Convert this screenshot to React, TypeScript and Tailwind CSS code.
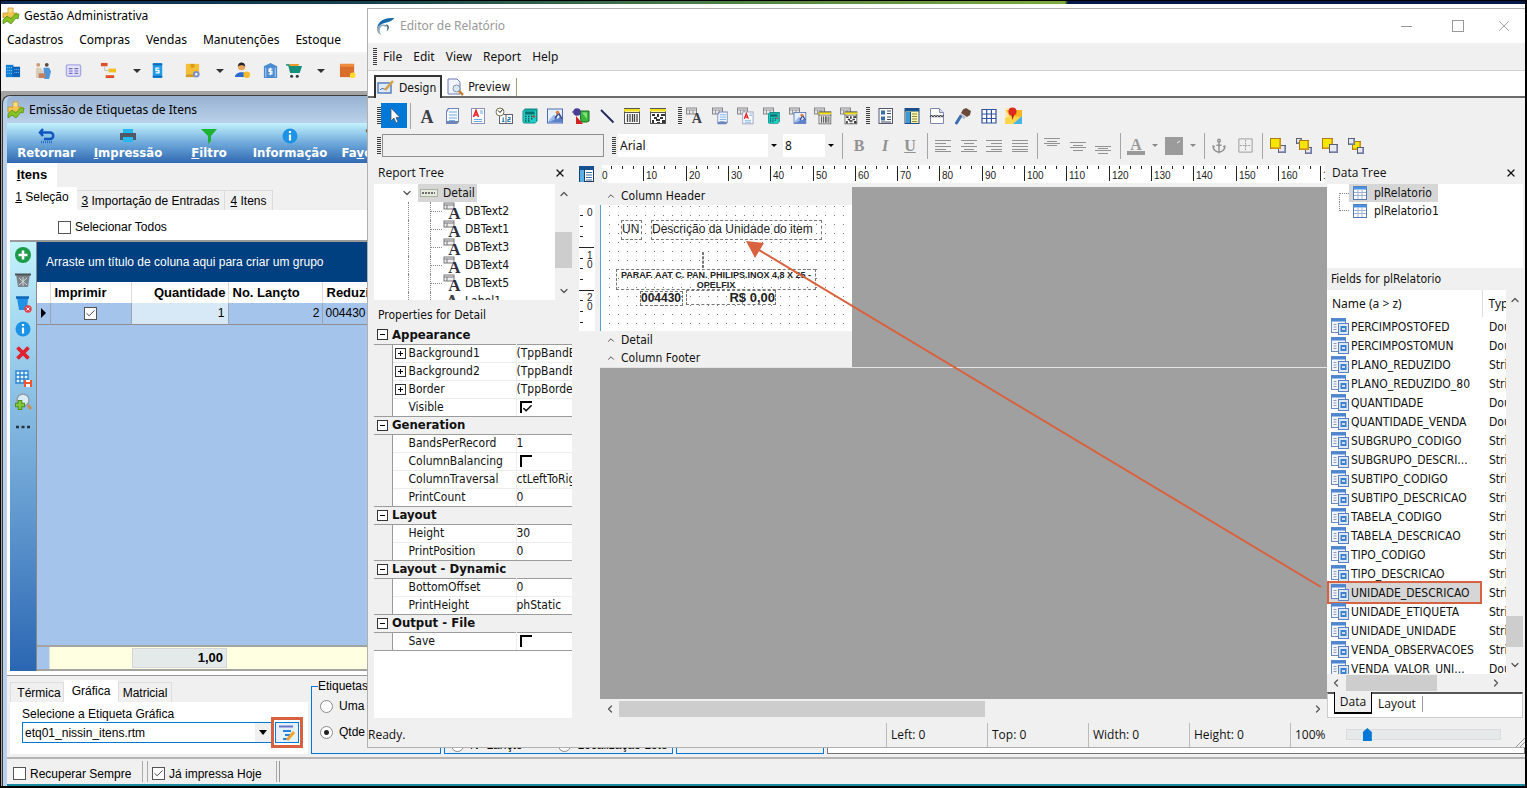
import React, { type ReactNode } from "react";
import { Anchor, Check, ChevronDown, ChevronUp, ChevronLeft, ChevronRight, X } from "lucide-react";

const title = "font-['Noto_Sans','Open_Sans',sans-serif]";
const segoe = "font-['Open_Sans','Noto_Sans',sans-serif]";
const tahoma = "font-['DejaVu_Sans_Condensed','DejaVu_Sans',sans-serif]";
const sans = "font-['Liberation_Sans',sans-serif]";

function Icon({ children, size = 18 }: { children: ReactNode; size?: number }) {
  return (
    <svg width={size} height={size} viewBox="0 0 18 18" className="block shrink-0" aria-hidden="true">
      {children}
    </svg>
  );
}

/* ---------- toolbar drawings, 18 x 18 ---------- */

const letterA = (
  <text x="9" y="15.500" textAnchor="middle" fontFamily="Liberation Serif" fontWeight="bold" fontSize="18" fill="#3d4048">
    A
  </text>
);

const memo = (
  <>
    <path d="M4 1h11v14l-2 2H2V4z" fill="#6f84b8" />
    <path d="M5 2h9v12H3V5z" fill="#f4f8ff" />
    <path d="M5 5h8M5 8h8M5 11h8M5 13.500h6" stroke="#79aee6" strokeWidth="1.200" />
  </>
);

const richText = (
  <>
    <rect x="2.500" y="1.500" width="13" height="15" fill="#fff" stroke="#8a93b5" />
    <path d="M5 12.500h8M5 14.500h8M11 4h3M11 6h3" stroke="#6aa7e6" />
    <path d="M4.500 10 7 3.500l2.500 6.500M5.500 8h3" fill="none" stroke="#e8202a" strokeWidth="1.600" />
  </>
);

const dateTime = (
  <>
    <rect x="4.500" y="7.500" width="13" height="9" fill="#fff" stroke="#5c6070" />
    <path d="M11 8v8" stroke="#5c6070" />
    <path d="M7 14.500h2.500M8.200 10.500v4M13 10.500h2v2h-2v2h2.500" stroke="#2c7cb8" fill="none" strokeWidth="1.200" />
    <circle cx="5" cy="5" r="4" fill="#fff" stroke="#77784c" />
    <path d="M3 3.500 5 5.500 7.500 2.500" stroke="#222" fill="none" />
  </>
);

const calculator = (
  <>
    <path d="M1.500 4 4 1.500h12.500V14L14 16.500H3L1.500 15z" fill="#12908c" />
    <rect x="2.500" y="3.500" width="12.500" height="12" fill="#1fd0c8" />
    <rect x="4" y="4.500" width="9.500" height="3" fill="#08706c" />
    <path d="M4 9.500h1.500M7 9.500h1.500M10 9.500h1.500M4 11.800h1.500M7 11.800h1.500M10 11.800h1.500M4 14h1.500M7 14h1.500" stroke="#064c4b" strokeWidth="1.300" />
    <path d="M12 9.500h2" stroke="#e02a2a" strokeWidth="2" />
  </>
);

const picture = (
  <>
    <rect x="1.500" y="2" width="15" height="14" fill="#e6effc" stroke="#4d6cb8" />
    <path d="M2 15.500 8 8l3.500 4 2-2 3 3v2.500z" fill="#5d82cc" />
    <path d="M3 13l5-5 3 3-7 4z" fill="#9dbbea" />
    <path d="M9 11.500 12.500 6l3.500 6" stroke="#3a4a8c" strokeWidth="1.600" fill="none" />
    <circle cx="11.500" cy="5.500" r="1.800" fill="#e07f3c" />
  </>
);

const shapes = (
  <>
    <path d="M8 4h9v10l-2 1H9z" fill="#38b83d" stroke="#176e22" />
    <path d="M10 5.500h5V12z" fill="#86e07c" />
    <circle cx="5" cy="5" r="3.800" fill="#4b3f94" />
    <path d="M4 9l7 8H4z" fill="#d32020" />
    <path d="M0 5h3" stroke="#4b3f94" />
  </>
);

const lineTool = <path d="M3 3 15.500 15.500" stroke="#24265c" strokeWidth="1.800" />;

const barcode = (
  <>
    <rect x="1.500" y="1.500" width="15" height="15" fill="#fff" stroke="#555" />
    <path d="M1 3h16" stroke="#f2df1a" strokeWidth="3" />
    <path d="M1 5.500h16M1 1.500h16" stroke="#555" />
    <path d="M4.500 7v8M7 7v8M9.500 7v8M11.500 7v8M14 7v8" stroke="#444" strokeWidth="1.300" />
  </>
);

const barcode2d = (
  <>
    <rect x="1.500" y="1.500" width="15" height="15" fill="#fff" stroke="#555" />
    <path d="M1 3h16" stroke="#f2df1a" strokeWidth="3" />
    <path d="M1 5.500h16M1 1.500h16" stroke="#555" />
    <path
      d="M3 7h3v2H3zM8 7h2v3H8zM12 7h4v2h-4zM5 10h3v2H5zM11 10h3v2h-3zM3 13h2v3H3zM7 12h4v2H7zM13 13h3v3h-3zM8 15h3v1H8z"
      fill="#333"
    />
  </>
);

const bound = (inner: ReactNode) => (
  <>
    <rect x=".5" y="1" width="10" height="6" fill="#e9e9e9" stroke="#85858a" />
    <path d="M0 3h11M3.500 3v4M7 3v4" stroke="#85858a" strokeWidth=".8" />
    <g transform="translate(3.800 3.800) scale(.79)">{inner}</g>
  </>
);

const region = (
  <>
    <rect x="2" y="1.500" width="13.500" height="15" fill="#fff" stroke="#55586a" />
    <path d="M4 3.500h4v4H4zM4 9.500h4v4H4z" fill="#3a6ea8" />
    <path d="M10 4h4M10 6.500h4M10 10h4M10 12.500h4M4 15h10" stroke="#3f4a60" />
  </>
);

const subReport = (
  <>
    <rect x="2" y="1.500" width="14" height="15" fill="#fff7a8" stroke="#1d4a83" />
    <path d="M2 3h14" stroke="#17518f" strokeWidth="3" />
    <path d="M5 5v11" stroke="#3e9ad6" strokeWidth="4" />
    <path d="M9 7h5M9 9.500h5M9 12h5M9 14.500h5" stroke="#8a8650" />
    <path d="M7.500 5v12" stroke="#1d4a83" />
  </>
);

const pageBreak = (
  <>
    <path d="M2.500 1.500h9l4 4v11h-13z" fill="#fff" stroke="#7e86b4" />
    <path d="M11.500 1.500v4h4" fill="#dde4f8" stroke="#7e86b4" />
    <path d="M3 8h12v3H3z" fill="#d9dce6" />
    <path d="M2 10l1.500-2L5 10l1.500-2L8 10l1.500-2L11 10l1.500-2L14 10l1.500-2" fill="none" stroke="#333" />
  </>
);

const brush = (
  <>
    <path d="M9 2.500 12 1l5 3-1 4-3 2-6-4z" fill="#6b4a3c" />
    <path d="M6.500 6.500 12 10l-2 2-5-3z" fill="#b9bcc6" />
    <path d="M6.500 9.500 2.500 16" stroke="#3c6fb0" strokeWidth="3" strokeLinecap="round" />
  </>
);

const tableGrid = (
  <path
    d="M2 2.500h14v13.500H2zM2 7h14M2 11.500h14M6.700 2.500V16M11.400 2.500V16"
    fill="#fff"
    stroke="#33549c"
    strokeWidth="1.200"
  />
);

const mapPin = (
  <>
    <path d="M0 1h8v10H0z" fill="#ffe9a8" />
    <path d="M1 3h16v9H6z" fill="#f8b51c" />
    <path d="M0 11 6 9l11 1v7H0z" fill="#ffd54a" />
    <path d="M8 17 17 9v8z" fill="#45b4ec" />
    <circle cx="7.500" cy="4.500" r="4" fill="#dc2a20" />
    <path d="M6.500 8h2.500L7.500 13z" fill="#a81912" />
  </>
);

const pointer = (
  <path d="M6 1v13l3-3 2 5 2-1-2-4.500H15z" fill="#fff" stroke="#44506a" strokeWidth=".8" />
);

const designTools: [string, ReactNode][] = [
  ["Label", letterA],
  ["Memo", memo],
  ["RichText", richText],
  ["SystemVariable", dateTime],
  ["Variable", calculator],
  ["Image", picture],
  ["Shape", shapes],
  ["Line", lineTool],
  ["BarCode", barcode],
  ["2DBarCode", barcode2d],
];
const dataTools: [string, ReactNode][] = [
  ["DBText", bound(letterA)],
  ["DBMemo", bound(memo)],
  ["DBRichText", bound(richText)],
  ["DBCalc", bound(calculator)],
  ["DBImage", bound(picture)],
  ["DBBarCode", bound(barcode)],
  ["DB2DBarCode", bound(barcode2d)],
];
const advancedTools: [string, ReactNode][] = [
  ["Region", region],
  ["SubReport", subReport],
  ["PageBreak", pageBreak],
  ["PaintBox", brush],
  ["TableGrid", tableGrid],
  ["Map", mapPin],
];

function Handle() {
  return (
    <span className="h-[18px] w-1 shrink-0 bg-[repeating-linear-gradient(to_bottom,#3c3c3c_0_1px,#f0f0f0_1px_2px)]" />
  );
}

function Tools({ items, className }: { items: [string, ReactNode][]; className: string }) {
  return (
    <div className={`flex shrink-0 ${className}`}>
      {items.map(([name, art]) => (
        <button key={name} aria-label={name} className="flex h-6 flex-1 items-center justify-center">
          <Icon>{art}</Icon>
        </button>
      ))}
    </div>
  );
}

function Sep() {
  return <span className="h-[26px] w-px shrink-0 bg-[#a5a5a5]" />;
}

function Caret({ className = "border-t-black" }: { className?: string }) {
  return <span className={`block size-0 shrink-0 border-x-[3px] border-t-[3px] border-x-transparent ${className}`} />;
}

function Combo({ label, value, className }: { label: string; value: string; className: string }) {
  return (
    <div className={`relative flex h-[23px] shrink-0 items-center bg-white ${className}`}>
      <select aria-label={label} className={`h-full w-full appearance-none bg-transparent pl-0.5 text-xs ${title}`}>
        <option>{value}</option>
      </select>
      <span className="pointer-events-none absolute right-0 flex h-full w-3 items-center justify-center bg-[#f0f0f0]">
        <Caret />
      </span>
    </div>
  );
}

type Bars = [number, number, number][];

const lines = (rows: Bars) => (
  <>
    {rows.map(([x, y, w]) => (
      <rect key={y} x={x} y={y} width={w} height="1" fill="#929292" />
    ))}
  </>
);

const textAlign: [string, ReactNode][] = [
  ["Align left", lines([[1, 3, 16], [1, 6, 11], [1, 9, 16], [1, 12, 11], [1, 14, 16]])],
  ["Align center", lines([[1, 3, 16], [4, 6, 10], [1, 9, 16], [4, 12, 10], [1, 14, 16]])],
  ["Align right", lines([[1, 3, 16], [6, 6, 11], [1, 9, 16], [6, 12, 11], [1, 14, 16]])],
  ["Justify", lines([[1, 3, 16], [1, 6, 16], [1, 9, 16], [1, 12, 16], [1, 14, 16]])],
];
const verticalAlign: [string, ReactNode][] = [
  ["Align top", lines([[1, 1, 16], [4, 4, 10], [1, 6, 16], [4, 8, 10]])],
  ["Align middle", lines([[1, 5, 16], [4, 8, 10], [1, 10, 16], [4, 13, 10]])],
  ["Align bottom", lines([[1, 9, 16], [4, 11, 10], [1, 13, 16], [4, 16, 10]])],
];

function Square({ x, y, s, hot }: { x: number; y: number; s: number; hot?: boolean }) {
  return (
    <>
      <rect x={x + 0.5} y={y + 0.5} width={s} height={s} fill={hot ? "#f7e600" : "#e6eaf0"} stroke={hot ? "#a87b18" : "#5a5f74"} />
      <path d={`M${x + s} ${y + 1}v${s - 1}h-${s - 1}`} fill="none" stroke={hot ? "#d79a1c" : "#7f86b0"} strokeWidth="1.500" />
    </>
  );
}

const orderIcons: [string, ReactNode][] = [
  ["Bring to Front", <><Square x={9} y={8} s={7} /><Square x={1} y={1} s={10} hot /></>],
  ["Bring Forward", <><Square x={1} y={1} s={5} /><Square x={10} y={10} s={6} /><Square x={4} y={3} s={9} hot /></>],
  ["Send to Back", <><Square x={1} y={1} s={10} hot /><Square x={8} y={7} s={8} /></>],
  ["Send Backward", <><Square x={5} y={4} s={8} hot /><Square x={1} y={1} s={6} /><Square x={10} y={10} s={6} /></>],
];

/* ---------- application window behind the editor ---------- */

const appLogo = (
  <>
    <path d="M6 1h5v5h4v5H1V6h5z" fill="#f0c452" stroke="#c4942c" strokeWidth=".8" />
    <path d="M6.500 1.500h4v4h-4z" fill="#f8dd84" />
    <path d="M1 13l4-4 4 3 4-5h4l-1 5-2-1-5 6-4-3-4 3z" fill="#86c323" stroke="#56901a" strokeWidth=".8" />
  </>
);

const appTools: [string, string, ReactNode][] = [
  ["Empresas", "w-[23px]", <><path d="M2 3h8v13H2z" fill="#127fd6" /><path d="M9 5h8v11H9z" fill="#0a61b8" /><path d="M3.500 6h5M3.500 9h5M3.500 12h5M11 8h5M11 11h5" stroke="#8ad2fa" strokeDasharray="1 1" /></>],
  ["Clientes", "w-[37px]", <><circle cx="4.500" cy="3" r="2" fill="#c99a6b" /><circle cx="13.500" cy="3" r="2" fill="#5a4a3f" /><path d="M2 6h5l3 4-2 7H2z" fill="#d9cdb8" /><path d="M10 6h6l2 4-2 8h-5z" fill="#4f96d8" /><path d="M5 12h7v5H5z" fill="#c07e62" /></>],
  ["Cartões", "w-6", <><rect x="1.500" y="3" width="15" height="12" rx="1.500" fill="#e4e4ff" stroke="#a9a8e2" strokeWidth="1.500" /><path d="M4 7h4M4 9.500h4M4 12h4M10 7h4M10 9.500h4M10 12h4" stroke="#6f6cc0" strokeWidth="1.200" /></>],
  ["Estrutura", "w-[46px]", <><path d="M1 1h7v3.500H1z" fill="#dd4f26" /><path d="M9 7h8v4H9z" fill="#f2bf23" /><path d="M6 14h9v3H6z" fill="#dd4f26" /><path d="M5 5v4h4" stroke="#bbb" fill="none" /></>],
  ["menu", "w-[11px]", null],
  ["Tabela", "w-[30px]", <><rect x="4" y="1" width="10" height="16" rx="1" fill="#1f9be8" /><path d="M4 2.500h10M4 15.500h10" stroke="#0d67bb" strokeWidth="2" /><path d="M11 6.500H7.500v2.500h3V11.500H7" fill="none" stroke="#fff" strokeWidth="1.500" /></>],
  ["Produtos", "w-[41px]", <><path d="M2 2h14v11H2z" fill="#f4bf35" /><path d="M7 2h4v4H7z" fill="#d69a17" /><path d="M2 13h10v3H2z" fill="#d49a1e" /><circle cx="13" cy="13" r="3.500" fill="#7d93c4" /><circle cx="13" cy="13" r="1.300" fill="#fff" /></>],
  ["menu", "w-[14px]", null],
  ["Vendedor", "w-[30px]", <><circle cx="8" cy="5" r="3.800" fill="#e9a55c" /><path d="M4 5c0-6 8-6 8 0-2-2-6-2-8 0z" fill="#23222b" /><path d="M1 16c0-7 14-7 14 0z" fill="#2a6cd0" /><circle cx="13.500" cy="13.500" r="3.500" fill="#f8ba2c" /></>],
  ["Banco", "w-[26px]", <><path d="M2 4.500 9 1l7 3.500V17H2z" fill="#4a8bd2" /><path d="M4 6v10M14 6v10" stroke="#b8d9f6" /><path d="M11 7.500H7.500V10h3v2.500H7M9 6v8" fill="none" stroke="#fff" strokeWidth="1.300" /></>],
  ["Compras", "w-5", <><path d="M4 2h11l-2 4H6z" fill="#f0982a" /><path d="M1 3h3l2 8h9l2-6H5" fill="#14907c" stroke="#14907c" strokeWidth="1.500" /><circle cx="7" cy="15" r="1.600" fill="#2e3a40" /><circle cx="13" cy="15" r="1.600" fill="#2e3a40" /></>],
  ["menu", "w-9", null],
  ["Estoque", "w-4", <><path d="M1 2h15v14H1z" fill="#d96e2c" /><path d="M1 2h15v3H1z" fill="#ef8c3c" /><circle cx="14.500" cy="14" r="3" fill="#ffdc2e" /></>],
];

const infoArt = (
  <>
    <circle cx="9" cy="9" r="7.500" fill="#1c93e6" />
    <path d="M9 7.500v6M9 4v2" stroke="#fff" strokeWidth="2.200" />
  </>
);

const ribbon: [string, string, string, ReactNode, string][] = [
  ["Retornar", "", "", <><path d="M5 2 2 5.500 5 9M2.500 5.500H12a3 3 0 0 1 0 6.500H6" fill="none" stroke="#0f57bd" strokeWidth="2.500" /><path d="M3 15h11" stroke="#2c6cc4" strokeWidth="2.500" strokeDasharray="1 1" /></>, "w-[79px]"],
  ["", "I", "mpressão", <><path d="M4 2h10v4H4z" fill="#22b6ee" /><path d="M1 6h16v7H1z" fill="#4f5966" /><path d="M4 10h10v5H4z" fill="#25b9ee" /></>, "w-[84px]"],
  ["", "F", "iltro", <path d="M1 2h16l-6 7v5l-3 3V9z" fill="#1db332" />, "w-[78px]"],
  ["Informação", "", "", infoArt, "w-[84px]"],
  ["Fa", "v", "oritos", <path d="M3 3h12l-3 6v5l-3 2-3-2V9z" fill="#d3a21f" stroke="#6b4e12" />, "w-[80px]"],
];

const sideArt: [string, ReactNode][] = [
  ["Adicionar", <><circle cx="9" cy="9" r="8" fill="#1d9a48" /><path d="M9 4.500v9M4.500 9h9" stroke="#fff" strokeWidth="2.600" /></>],
  ["Excluir", <><path d="M2 3h14l-2 13H4z" fill="#7b838a" /><path d="M1 3.500h16" stroke="#4c5257" strokeWidth="2" /><path d="M5 7l8 7M13 7l-8 7M9 6v9" stroke="#d4dade" /></>],
  ["Limpar", <><path d="M3 3h11l-1 12H5z" fill="#2091e4" /><path d="M2 2.500h13" stroke="#0f68b8" strokeWidth="2.500" /><circle cx="14" cy="14" r="3.700" fill="#e4404c" /><path d="M12.500 12.500l3 3M15.500 12.500l-3 3" stroke="#fff" /></>],
  ["Informação", infoArt],
  ["Cancelar", <path d="M3.500 3.500l11 11M14.500 3.500l-11 11" stroke="#e0222f" strokeWidth="3.800" />],
  ["Salvar grade", <><path d="M2 2h12v12H2zM2 6h12M2 10h12M6 2v12M10 2v12" fill="#e8f6ff" stroke="#2b84d2" strokeWidth="1.400" /><path d="M10 11h8v7h-8z" fill="#f0532d" /><path d="M12 11h4v2h-4zM12 15h4v3h-4z" fill="#fff" /></>],
  ["Pesquisar", <><circle cx="9" cy="7" r="6" fill="#d9edf9" stroke="#8f9da8" strokeWidth="1.500" /><path d="M14 12l3 4" stroke="#c98f52" strokeWidth="3" /><path d="M6 7v10M1 12h10" stroke="#4d8e1c" strokeWidth="4.500" /><path d="M6 8v8M2 12h8" stroke="#84c93b" strokeWidth="2.500" /></>],
  ["Mais", <path d="M2 9h3M7.500 9h3M13 9h3" stroke="#26343f" strokeWidth="2.400" />],
];

function TickBox({ id, label, checked, className = "" }: { id: string; label: string; checked?: boolean; className?: string }) {
  return (
    <label htmlFor={id} className={`flex items-center gap-1 whitespace-nowrap ${className}`}>
      <span className="relative size-[13px] shrink-0">
        <input id={id} type="checkbox" defaultChecked={checked} className="peer block size-[13px] appearance-none border border-[#555] bg-white" />
        <Check size={11} strokeWidth={2} className="pointer-events-none absolute left-px top-px hidden text-[#333] peer-checked:block" />
      </span>
      {label}
    </label>
  );
}

function Radio({ label, checked, name }: { label: string; checked?: boolean; name: string }) {
  return (
    <label className="flex items-center gap-1.5 whitespace-nowrap">
      <input
        type="radio"
        name={name}
        defaultChecked={checked}
        className="size-[13px] shrink-0 appearance-none rounded-full border border-[#8a8a8a] bg-white checked:bg-[radial-gradient(#222_0_2px,white_3px)]"
      />
      {label}
    </label>
  );
}

function AppWindow() {
  return (
    <div className="flex min-h-0 flex-1 flex-col bg-white">
      <header className={`flex h-6 shrink-0 items-center gap-1 pl-px text-xs ${title}`}>
        <Icon size={18}>{appLogo}</Icon>
        <span>Gestão Administrativa</span>
      </header>
      <nav className={`flex h-6 shrink-0 items-center gap-4 px-1.5 text-xs ${title}`}>
        {["Cadastros", "Compras", "Vendas", "Manutenções", "Estoque"].map((m) => (
          <button key={m}>{m}</button>
        ))}
      </nav>
      <div className="flex h-[39px] shrink-0 items-center border-t-2 border-[#f4f4f4] bg-[#f0f0f0] pb-1">
        {appTools.map(([name, w, art], i) => (
          <button key={i} aria-label={name} className={`flex h-6 shrink-0 items-center justify-center ${w}`}>
            {art ? <Icon size={17}>{art}</Icon> : <span className="block size-0 border-x-4 border-t-4 border-x-transparent border-t-[#333]" />}
          </button>
        ))}
      </div>
      <div className="flex min-h-0 flex-1 flex-col bg-[#a3a3a3] pt-1">
        <ChildWindow />
      </div>
    </div>
  );
}

function ChildWindow() {
  return (
    <section className="ml-px flex min-h-0 flex-1 flex-col rounded-tl-lg border-l border-t border-[#3c3c3c] bg-[#b9d1ea] pl-1">
      <header className={`flex h-[27px] shrink-0 items-center gap-1 rounded-tl-md bg-linear-to-b from-[#98b2d1] to-[#b9d1ea] text-xs ${title}`}>
        <Icon>{appLogo}</Icon>
        Emissão de Etiquetas de Itens
      </header>
      <div className={`flex h-10 shrink-0 bg-linear-to-b from-[#c4f3fe] via-[#6fa9db] to-[#3069b2] pb-0.5 text-[13px] font-bold text-white ${tahoma}`}>
        {ribbon.map(([before, key, after, art, w]) => (
          <button key={before + key} className={`flex shrink-0 flex-col items-center justify-end leading-4 ${w}`}>
            <Icon>{art}</Icon>
            <span>
              {before}
              <u>{key}</u>
              {after}
            </span>
          </button>
        ))}
      </div>
      <div className={`flex min-h-0 flex-1 flex-col bg-[#f0f0f0] text-xs ${sans}`}>
        <div className="flex h-6 shrink-0">
          <button className="w-[50px] bg-white text-[13px] font-bold">
            <u>I</u>tens
          </button>
        </div>
        <div className="flex h-[23px] shrink-0 items-end">
          <button className="h-[23px] w-[70px] bg-white pb-1">
            <u>1</u> Seleção
          </button>
          <button className="h-5 w-[148px] border-r border-t border-[#dcdcdc]">
            <u>3</u> Importação de Entradas
          </button>
          <button className="h-5 w-[48px] border-r border-t border-[#dcdcdc]">
            <u>4</u> Itens
          </button>
        </div>
        <div className="flex min-h-0 flex-1 flex-col bg-white px-[3px] pb-1">
          <div className="flex h-8 shrink-0 items-center border-b-2 border-[#9a9a9a] pl-12 pt-1">
            <TickBox id="all" label="Selecionar Todos" />
          </div>
          <div className="flex min-h-0 flex-1">
            <div className="w-[26px] shrink-0 bg-linear-to-b from-[#c4f3fe] to-[#2a66b2] pt-1">
              <div className="flex h-[190px] flex-col items-center justify-between">
                {sideArt.map(([name, art]) => (
                  <button key={name} aria-label={name}>
                    <Icon>{art}</Icon>
                  </button>
                ))}
              </div>
            </div>
            <ItemsGrid />
          </div>
        </div>
        <LabelOptions />
        <footer className="flex h-[27px] shrink-0 border-t-2 border-[#b4b4b4] py-0.5">
          <div className="flex w-[136px] items-center border-r border-[#aaa] pl-1.5 pt-1">
            <TickBox id="recover" label="Recuperar Sempre" />
          </div>
          <div className="ml-1 flex w-[130px] items-center border-x border-[#aaa] pl-1 pt-1">
            <TickBox id="printed" label="Já impressa Hoje" checked />
          </div>
          <div className="ml-0.5 flex-1 border-l border-[#999]" />
        </footer>
        <div className="h-0.5 shrink-0 bg-[#1a8aa0]" />
      </div>
    </section>
  );
}

function ItemsGrid() {
  return (
    <div className="flex min-w-0 flex-1 flex-col border-l border-[#888] bg-[#a4c4ec]">
      <div className="flex h-10 shrink-0 items-center bg-[#004080] pl-[9px] text-white">
        Arraste um título de coluna aqui para criar um grupo
      </div>
      <table className="w-[560px] table-fixed border-collapse">
        <colgroup>
          <col className="w-[13px]" />
          <col className="w-[81px]" />
          <col className="w-[97px]" />
          <col className="w-[94px]" />
          <col />
        </colgroup>
        <thead>
          <tr className="h-[21px] bg-white text-[13px] leading-4">
            <th className="border-r border-[#ddd]" />
            <th className="border-r border-[#ddd] px-1 text-left">Imprimir</th>
            <th className="border-r border-[#ddd] px-0.5 text-right">Quantidade</th>
            <th className="border-r border-[#ddd] px-1 text-left">No. Lançto</th>
            <th className="px-1 text-left">Reduzido</th>
          </tr>
        </thead>
        <tbody>
          <tr className="h-[21px] border-b border-[#8f8f8f] leading-4">
            <td className="border-r border-[#9aa4b4] pl-1">
              <span className="block size-0 border-y-[5px] border-l-[5px] border-y-transparent border-l-black" />
            </td>
            <td className="border-r border-[#9aa4b4]">
              <TickBox id="row-print" label="" checked className="justify-center" />
            </td>
            <td className="border-r border-[#9aa4b4] bg-[#d7e9f6] px-[3px] text-right">1</td>
            <td className="border-r border-[#9aa4b4] px-0.5 text-right">2</td>
            <td className="px-[3px]">004430</td>
          </tr>
        </tbody>
      </table>
      <div className="flex-1" />
      <div className="flex h-[26px] shrink-0 items-center border-y-2 border-[#a3a3a3] bg-[#ffffe1]">
        <div className="h-full w-[13px] border-r border-[#ddd] bg-[#a4c4ec]" />
        <div className="ml-[82px] flex h-[20px] w-[95px] items-center justify-end border border-[#d6d6d6] bg-[#e4e9ea] pr-[3px] text-[13px] font-bold">
          1,00
        </div>
      </div>
    </div>
  );
}

function LabelOptions() {
  return (
    <div className="flex h-[82px] shrink-0 gap-[3px] border-t border-[#999] pb-[3px] pl-[3px] pt-1">
      <div className="flex w-[298px] shrink-0 flex-col">
        <div className="flex items-end">
          <button className="h-5 w-[54px] border border-b-0 border-[#ddd] pl-1">Térmica</button>
          <button className="h-[22px] w-[54px] bg-white">Gráfica</button>
          <button className="h-5 w-[54px] border border-b-0 border-[#ddd]">Matricial</button>
        </div>
        <div className="flex-1 bg-white px-1 pb-1 pt-1">
          <div className="flex flex-col">
            <label htmlFor="label-file" className="pl-2 leading-4">
              Selecione a Etiqueta Gráfica
            </label>
            <div className="flex items-center gap-[3px] pl-2">
              <div className="flex h-[21px] w-[250px] items-center border border-[#0078d7] bg-white">
                <input id="label-file" defaultValue="etq01_nissin_itens.rtm" className="min-w-0 flex-1 px-0.5 outline-none" />
                <button aria-label="Abrir lista" className="flex h-full w-4 items-center justify-center bg-[#f0f0f0]">
                  <span className="block size-0 border-x-4 border-t-[5px] border-x-transparent border-t-black" />
                </button>
              </div>
              <button aria-label="Editar etiqueta" className="relative flex h-[21px] w-6 items-center justify-center border border-[#0078d7] bg-[#e5f1fb]">
                <Icon>
                  <path d="M1 2.500h14" stroke="#6b74cc" strokeWidth="2" />
                  <path d="M5 7h8M7 11h5M5 15h4" stroke="#2582e6" strokeWidth="2" />
                  <path d="M9 16l7-8" stroke="#f2a12a" strokeWidth="3" />
                </Icon>
                <span className="pointer-events-none absolute -inset-x-[5px] -inset-y-1.5 border-[3px] border-[#d8623f]" />
              </button>
            </div>
          </div>
        </div>
      </div>
      <fieldset className="w-[130px] min-w-0 shrink-0 border border-[#0078d7] px-2">
        <legend className="-ml-0.5 leading-3">Etiquetas</legend>
        <div className="flex flex-col gap-[13px] pt-2 leading-[13px]">
          <Radio name="qty" label="Uma" />
          <Radio name="qty" label="Qtde" checked />
        </div>
      </fieldset>
      <div className="flex w-[229px] shrink-0 items-end gap-9 overflow-hidden border border-[#0078d7] px-1.5">
        <Radio name="order" label="Nº Lançto" />
        <Radio name="order" label="Localização Lote" />
      </div>
      <div className="w-[148px] shrink-0 border border-[#0078d7]" />
      <div className="flex-1 border border-[#777] bg-white" />
    </div>
  );
}

/* ---------- report editor ---------- */

const boundText = (
  <Icon>
    <rect x="1" y="1" width="10" height="6" fill="#eee" stroke="#77777c" />
    <path d="M1 3h10M4 3v4" stroke="#77777c" />
    <text x="11.500" y="17" textAnchor="middle" fontFamily="Liberation Serif" fontWeight="bold" fontSize="17" fill="#2e3040">
      A
    </text>
  </Icon>
);

const tableArt = (
  <svg width="14" height="14" viewBox="0 0 14 14" className="shrink-0" aria-hidden="true">
    <rect x=".5" y=".5" width="13" height="13" fill="#fff" stroke="#5477b8" />
    <path d="M0 2h14" stroke="#4d8fdc" strokeWidth="3" />
    <path d="M1 6.500h12M1 9.500h12M5 4v9M9 4v9" stroke="#9fb2d2" />
  </svg>
);

function PanelHead({ text, close, className = "" }: { text: string; close?: boolean; className?: string }) {
  return (
    <div className={`flex h-[22px] shrink-0 items-center justify-between pl-1 pr-1.5 ${className}`}>
      {text}
      {close && (
        <button aria-label={`Close ${text}`}>
          <X size={12} strokeWidth={2.500} />
        </button>
      )}
    </div>
  );
}

type Prop = { name: string; value: string; kind?: "plus" | "check" | "uncheck" };
const groups: { title: string; props: Prop[] }[] = [
  {
    title: "Appearance",
    props: [
      { name: "Background1", value: "(TppBandBackground)", kind: "plus" },
      { name: "Background2", value: "(TppBandBackground)", kind: "plus" },
      { name: "Border", value: "(TppBorder)", kind: "plus" },
      { name: "Visible", value: "", kind: "check" },
    ],
  },
  {
    title: "Generation",
    props: [
      { name: "BandsPerRecord", value: "1" },
      { name: "ColumnBalancing", value: "", kind: "uncheck" },
      { name: "ColumnTraversal", value: "ctLeftToRight" },
      { name: "PrintCount", value: "0" },
    ],
  },
  { title: "Layout", props: [{ name: "Height", value: "30" }, { name: "PrintPosition", value: "0" }] },
  { title: "Layout - Dynamic", props: [{ name: "BottomOffset", value: "0" }, { name: "PrintHeight", value: "phStatic" }] },
  { title: "Output - File", props: [{ name: "Save", value: "", kind: "uncheck" }] },
];

function Expander({ open }: { open?: boolean }) {
  return (
    <svg width="11" height="11" viewBox="0 0 11 11" className="shrink-0" aria-hidden="true">
      <rect x=".5" y=".5" width="10" height="10" fill="#fff" stroke="#333" />
      <path d={open ? "M3 5.500h5" : "M3 5.500h5M5.500 3v5"} stroke="#000" />
    </svg>
  );
}

function PropertyGrid() {
  return (
    <table className="w-full table-fixed border-collapse leading-4">
      <colgroup>
        <col className="w-[18px]" />
        <col className="w-[124px]" />
        <col />
      </colgroup>
      {groups.map((g) => (
        <tbody key={g.title}>
          <tr className="h-[18px] border-b border-[#9b9b9b] bg-[#f0f0f0]">
            <th colSpan={3} className="p-0 text-left">
              <span className="flex items-center gap-1 pl-[3px] text-[13px] leading-4">
                <Expander open />
                {g.title}
              </span>
            </th>
          </tr>
          {g.props.map((p, i) => {
            const last = i === g.props.length - 1;
            const line = last ? "border-b-[#9b9b9b]" : "border-b-[#ececec]";
            return (
              <tr key={p.name} className="h-[18px]">
                <td className={`border-r border-r-[#9b9b9b] bg-[#f0f0f0] p-0 ${last ? "border-b border-b-[#9b9b9b]" : ""}`} />
                <td className={`border-b border-r border-r-[#ececec] p-0 ${line}`}>
                  <span className="flex items-center gap-[3px] pl-0.5">
                    {p.kind === "plus" ? <Expander /> : <span className="w-[11px]" />}
                    {p.name}
                  </span>
                </td>
                <td className={`overflow-hidden whitespace-nowrap border-b p-0 ${line}`}>
                  {p.kind === "check" || p.kind === "uncheck" ? (
                    <span className="relative ml-[3px] block size-[12px]">
                      <input
                        type="checkbox"
                        aria-label={p.name}
                        defaultChecked={p.kind === "check"}
                        className="peer block size-[12px] appearance-none border-l-2 border-t-2 border-black bg-white"
                      />
                      <Check size={11} strokeWidth={3.500} className="pointer-events-none absolute left-0.5 top-0.5 hidden peer-checked:block" />
                    </span>
                  ) : (
                    p.value
                  )}
                </td>
              </tr>
            );
          })}
        </tbody>
      ))}
    </table>
  );
}

function TreeRow({ children }: { children: ReactNode }) {
  return (
    <li className="flex h-[18px] items-center pl-[34px]">
      <span className="flex h-[18px] items-center border-l border-dotted border-[#888] pl-[21px]">
        <span className="flex h-[18px] items-center border-l border-dotted border-[#888]">
          <span className="mr-px w-[11px] border-t border-dotted border-[#888]" />
          {children}
        </span>
      </span>
    </li>
  );
}

function ReportTree() {
  return (
    <div className="flex h-[116px] shrink-0 overflow-hidden bg-white">
      <ul className="min-w-0 flex-1">
        <li className="flex h-[18px] items-center pl-[27px]">
          <ChevronDown size={12} strokeWidth={2.500} className="text-[#555]" />
          <span className="w-[5px]" />
          <span className="flex h-[18px] items-center gap-[5px] bg-[#d6d6d6] px-0.5">
            <svg width="18" height="8" viewBox="0 0 18 8" aria-hidden="true">
              <rect x=".5" y=".5" width="17" height="7" fill="#e6ebe0" stroke="#aab29f" />
              <path d="M2 4h13" stroke="#444" strokeWidth="1.500" strokeDasharray="2 1" />
            </svg>
            Detail
          </span>
        </li>
        {["DBText2", "DBText1", "DBText3", "DBText4", "DBText5"].map((t) => (
          <TreeRow key={t}>
            {boundText}
            <span className="ml-1">{t}</span>
          </TreeRow>
        ))}
        <TreeRow>
          <Icon>{letterA}</Icon>
          <span className="ml-1">Label1</span>
        </TreeRow>
      </ul>
      <div className="flex w-[17px] shrink-0 flex-col items-center bg-[#f0f0f0] text-[#555]">
        <ChevronUp size={12} strokeWidth={2.500} className="mt-1" />
        <div className="mt-8 h-9 w-full bg-[#cdcdcd]" />
        <ChevronDown size={12} strokeWidth={2.500} className="mb-[3px] mt-auto" />
      </div>
    </div>
  );
}

const marks = Array.from({ length: 18 }, (_, i) => i);

function TopRuler() {
  return (
    <svg height="18" className="block min-w-0 flex-1 overflow-hidden bg-white font-['Liberation_Sans']" aria-hidden="true">
      {marks.map((m) => {
        const x = Math.round(m * 42.3 - 1);
        return (
          <g key={m} fill="#222">
            {m > 0 && <rect x={x} y="1" width="1" height="15" />}
            <rect x={x + 10} y="1" width="1" height="3" />
            <rect x={x + 21} y="1" width="1" height="3" />
            <rect x={x + 32} y="1" width="1" height="3" />
            <text x={m === 0 ? 0 : x + 3} y="14" fontSize="10">
              {m * 10}
            </text>
          </g>
        );
      })}
    </svg>
  );
}

function SideRuler() {
  return (
    <svg width="16" height="126" viewBox="0 0 16 126" className="block bg-white font-['Liberation_Sans']" aria-hidden="true">
      <g fill="#222" fontSize="10">
        {[10, 21, 31, 53, 63, 74, 95, 106, 117].map((y) => (
          <rect key={y} x="1" y={y} width="3" height="1" />
        ))}
        <rect x="0" y="42" width="15" height="1" />
        <rect x="0" y="85" width="15" height="1" />
        <text x="8" y="11">0</text>
        <text x="8" y="54">1</text>
        <text x="8" y="63">0</text>
        <text x="8" y="96">2</text>
        <text x="8" y="105">0</text>
      </g>
    </svg>
  );
}

function Band({ title: text }: { title: string }) {
  return (
    <div className="flex h-[18px] shrink-0 items-center gap-[5px] pl-1.5">
      <ChevronUp size={10} strokeWidth={2} className="text-[#333]" />
      {text}
    </div>
  );
}

function LabelCanvas() {
  const box = "absolute border border-dashed border-[#777] whitespace-nowrap";
  return (
    <div className={`relative h-[126px] border-l border-[#4fa3dd] bg-white text-[#222] ${sans}`}>
      <svg width="100%" height="100%" className="block" aria-hidden="true">
        <defs>
          <pattern id="dots" x="8" y="1" width="9" height="9" patternUnits="userSpaceOnUse">
            <rect width="1" height="1" fill="#777" />
          </pattern>
        </defs>
        <rect width="100%" height="100%" fill="url(#dots)" />
      </svg>
      <div className={`${box} left-[20px] top-[15px] h-5 w-[21px] text-xs leading-4`}>UN</div>
      <div className={`${box} left-[50px] top-[15px] h-5 w-[171px] text-xs leading-4`}>Descrição da Unidade do item</div>
      <div className={`${box} left-[101px] top-[47px] h-4 w-0.5`} />
      <div className={`${box} left-[15px] top-[64px] h-[21px] w-[200px] text-center text-[9px] font-bold leading-[10px]`}>
        PARAF. AAT C. PAN. PHILIPS.INOX 4,8 X 25 -
        <br />
        OPELFIX
      </div>
      <div className={`${box} left-[39px] top-[86px] h-[15px] w-[43px] text-[12px] font-bold leading-[13px]`}>004430</div>
      <div className={`${box} left-[85px] top-[85px] h-[15px] w-[90px] text-right text-[13px] font-bold leading-[13px]`}>R$ 0,00</div>
    </div>
  );
}

function Workspace() {
  return (
    <div className="flex min-w-0 flex-1 flex-col pl-[7px] pt-[7px]">
      <div className="flex h-[22px] shrink-0 items-start gap-2 pr-0.5">
        <svg width="15" height="16" viewBox="0 0 15 16" className="mt-px shrink-0" aria-hidden="true">
          <rect x=".5" y=".5" width="14" height="15" fill="#fff" stroke="#1d3c66" />
          <path d="M0 2h15" stroke="#174f8f" strokeWidth="4" />
          <path d="M3 4v12" stroke="#58b0e8" strokeWidth="4" />
          <path d="M7 6.500h6M7 9h6M7 11.500h6M7 14h6" stroke="#3f6fa8" />
          <path d="M5.500 4v12" stroke="#1d3c66" />
        </svg>
        <TopRuler />
      </div>
      <div className="flex min-h-0 flex-1">
        <div className="w-[21px] shrink-0 pt-[18px]">
          <SideRuler />
        </div>
        <div className="flex min-w-0 flex-1 flex-col bg-[#a0a0a0]">
          <div className="w-[252px] bg-[#f0f0f0]">
            <Band title="Column Header" />
            <LabelCanvas />
            <Band title="Detail" />
            <Band title="Column Footer" />
          </div>
          <div className="h-px bg-[#e4e4e4]" />
        </div>
      </div>
      <div className="flex h-[19px] shrink-0 items-center pl-[21px] text-[#555]">
        <span className="flex w-[19px] justify-center">
          <ChevronLeft size={12} strokeWidth={2.500} />
        </span>
        <div className="h-4 w-[366px] bg-[#cdcdcd]" />
        <ChevronRight size={12} strokeWidth={2.500} className="ml-auto mr-[3px]" />
      </div>
    </div>
  );
}

const fields: [string, string][] = [
  ["PERCIMPOSTOFED", "Double"],
  ["PERCIMPOSTOMUN", "Double"],
  ["PLANO_REDUZIDO", "String"],
  ["PLANO_REDUZIDO_80", "String"],
  ["QUANTIDADE", "Double"],
  ["QUANTIDADE_VENDA", "Double"],
  ["SUBGRUPO_CODIGO", "String"],
  ["SUBGRUPO_DESCRI...", "String"],
  ["SUBTIPO_CODIGO", "String"],
  ["SUBTIPO_DESCRICAO", "String"],
  ["TABELA_CODIGO", "String"],
  ["TABELA_DESCRICAO", "String"],
  ["TIPO_CODIGO", "String"],
  ["TIPO_DESCRICAO", "String"],
  ["UNIDADE_DESCRICAO", "String"],
  ["UNIDADE_ETIQUETA", "String"],
  ["UNIDADE_UNIDADE", "String"],
  ["VENDA_OBSERVACOES", "String"],
  ["VENDA_VALOR_UNI...", "Double"],
];

const fieldArt = (
  <svg width="18" height="17" viewBox="0 0 18 17" className="shrink-0" aria-hidden="true">
    <rect x=".5" y=".5" width="14" height="14" fill="#f2f6fc" stroke="#6a8ac4" />
    <path d="M0 2h15" stroke="#4d86d0" strokeWidth="3" />
    <path d="M2.500 6.500h3M2.500 9h3M2.500 11.500h3" stroke="#8c9ab4" />
    <rect x="7.500" y="5.500" width="10" height="11" fill="#dbe8f8" stroke="#5b7fc0" />
    <rect x="9.500" y="8" width="6" height="6" fill="#3f80cc" />
    <path d="M11 11h3" stroke="#fff" strokeWidth="1.500" />
  </svg>
);

function DataPanel() {
  return (
    <aside className="flex w-[198px] shrink-0 flex-col pr-0.5 pt-1">
      <PanelHead text="Data Tree" close className={`pl-[5px] ${segoe}`} />
      <ul className="h-[84px] shrink-0 bg-white pl-3">
        {["plRelatorio", "plRelatorio1"].map((t, i) => (
          <li key={t} className="flex h-[18px] items-center">
            <span className={`w-[10px] border-l border-dotted border-[#888] ${i === 0 ? "h-[9px] self-end border-t" : "h-[9px] self-start border-b"}`} />
            <span className={`flex h-[18px] items-center gap-[7px] pl-1 pr-1.5 ${i === 0 ? "bg-[#d6d6d6]" : ""}`}>
              {tableArt}
              {t}
            </span>
          </li>
        ))}
      </ul>
      <PanelHead text="Fields for plRelatorio" />
      <div className="flex min-h-0 flex-1 overflow-hidden bg-white">
        <div className="min-w-0 flex-1 overflow-hidden">
          <table className="w-[240px] table-fixed border-collapse">
            <colgroup>
              <col className="w-[155px]" />
              <col />
            </colgroup>
            <thead>
              <tr className={`h-[27px] ${title}`}>
                <th className="border-r border-[#dedede] px-[5px] py-0 text-left font-normal">Name (a &gt; z)</th>
                <th className="px-1.5 py-0 text-left font-normal">Type</th>
              </tr>
            </thead>
            <tbody>
              {fields.map(([name, type]) => {
                const picked = name === "UNIDADE_DESCRICAO";
                return (
                  <tr key={name} className="h-[19px] leading-[18px]">
                    <td className="p-0">
                      <span className={`relative flex h-[19px] items-center gap-0.5 pl-1 ${picked ? "bg-[#d6d6d6]" : ""}`}>
                        {fieldArt}
                        {name}
                        {picked && <span className="pointer-events-none absolute -inset-y-0.5 inset-x-0 border-2 border-[#d8623f]" />}
                      </span>
                    </td>
                    <td className="px-[7px] py-0">{type}</td>
                  </tr>
                );
              })}
            </tbody>
          </table>
        </div>
        <div className="flex w-[17px] shrink-0 flex-col items-center bg-[#f0f0f0] text-[#555]">
          <ChevronUp size={12} strokeWidth={2.500} className="mt-1" />
          <div className="mt-auto h-[31px] w-full bg-[#cdcdcd]" />
          <ChevronDown size={12} strokeWidth={2.500} className="mb-[3px] mt-3" />
        </div>
      </div>
      <div className="flex h-[18px] shrink-0 items-center pl-[3px] text-[#555]">
        <ChevronLeft size={12} strokeWidth={2.500} />
        <div className="ml-1 h-4 w-[91px] bg-[#cdcdcd]" />
        <ChevronRight size={12} strokeWidth={2.500} className="ml-auto mr-[21px]" />
      </div>
      <div className={`flex h-[26px] shrink-0 items-start border border-t-2 border-[#ccc] border-t-[#555] bg-white pl-1.5 ${segoe}`}>
        <button className="-mt-0.5 h-[22px] w-[38px] border-x border-b-2 border-black bg-[#f0f0f0]">Data</button>
        <button className="mt-0.5 h-4 w-[51px] border-r border-[#999] leading-4">Layout</button>
      </div>
    </aside>
  );
}

function Editor() {
  return (
    <section
      className={`absolute bottom-[38px] left-[366px] right-0 top-2 flex flex-col border border-r-0 border-[#b0b0b0] bg-[#f0f0f0] text-xs text-[#111] ${tahoma}`}
    >
      <header className={`flex h-[34px] shrink-0 items-center bg-white pl-2 text-[#999] ${title}`}>
        <Icon size={19}>
          <path d="M17.500 1C8 0 1 4 1 12c1-3 2-4 4-5 3-2 8-1 12.500-6z" fill="#1769aa" />
          <path d="M1 11c0 3 1 5 4 6-2-3-2-6 0-8 2-1 4 0 5 1 0-2-1-3-3-3-3 0-5 1-6 4z" fill="#8fa8b8" />
          <path d="M7 8.500c3-1 5 0 3 5 3-2 3-6 0-6.500z" fill="#35617e" />
        </Icon>
        <span className="ml-[5px] flex-1">Editor de Relatório</span>
        <button aria-label="Minimize" className="flex w-[51px] justify-center">
          <span className="h-px w-[11px] bg-[#999]" />
        </button>
        <button aria-label="Maximize" className="flex w-[51px] justify-center">
          <span className="size-[12px] border border-[#999]" />
        </button>
        <button aria-label="Close" className="flex w-[42px] justify-center">
          <X size={18} strokeWidth={1.200} />
        </button>
      </header>
      <nav className={`flex h-[28px] shrink-0 items-center gap-1.5 border-b border-[#d0d0d0] pl-[5px] ${title}`}>
        <Handle />
        <span className="flex gap-[11px]">
          {["File", "Edit", "View", "Report", "Help"].map((m) => (
            <button key={m}>{m}</button>
          ))}
        </span>
      </nav>
      <div className="flex h-[27px] shrink-0 items-end border-b-2 border-[#6b6b6b] bg-white pl-1.5">
        <button className="-mb-0.5 flex h-[23px] items-center gap-1 border-2 border-b-0 border-[#333] bg-[#f0f0f0] pl-px pr-1">
          <Icon>
            <rect x="1" y="4" width="13" height="10" fill="#dfeafc" stroke="#3f6fb8" strokeWidth="1.300" />
            <path d="M3 11c3-4 5 2 8-2" fill="none" stroke="#3f6fb8" />
            <path d="M8 11l8-9" stroke="#d9a13a" strokeWidth="2.500" />
          </Icon>
          Design
        </button>
        <button className="ml-1 flex h-[18px] items-center gap-1 border-r border-[#a09a80] pr-1.5">
          <Icon>
            <path d="M2 1h9l3 3v12H2z" fill="#f3f5fc" stroke="#6c76b4" />
            <circle cx="10.500" cy="10.500" r="3.500" fill="#d4e8f6" stroke="#8795a8" />
            <path d="M13 13l4 4" stroke="#c48334" strokeWidth="2.500" />
          </Icon>
          Preview
        </button>
      </div>
      <div className="flex h-[35px] shrink-0 items-center pl-[9px]">
        <Handle />
        <button aria-label="Select" className="flex h-[25px] w-[26px] shrink-0 items-center justify-center bg-[#0078d7]">
          <Icon>{pointer}</Icon>
        </button>
        <span className="flex w-[7px] justify-center">
          <Sep />
        </span>
        <Tools items={designTools} className="w-[257px]" />
        <span className="flex w-[11px] justify-end">
          <Handle />
        </span>
        <Tools items={dataTools} className="w-[180px]" />
        <span className="flex w-[11px] justify-center">
          <Handle />
        </span>
        <Tools items={advancedTools} className="w-[154px]" />
      </div>
      <div className="flex h-[25px] shrink-0 items-center pl-[9px]">
        <Handle />
        <input aria-label="Expression" className="ml-px h-[23px] w-[222px] shrink-0 border border-[#8f8f8f] bg-[#efefef]" />
        <span className="ml-2 mr-0.5 flex">
          <Handle />
        </span>
        <Combo label="Font" value="Arial" className="w-[162px]" />
        <Combo label="Size" value="8" className="ml-[3px] w-[54px]" />
        <span className="ml-[5px] flex items-center font-['Liberation_Serif'] text-base font-bold text-[#929292]">
          <Sep />
          <button className="ml-[3px] w-[26px]">B</button>
          <button className="w-[26px] italic">I</button>
          <button className="mr-[5px] w-6 underline">U</button>
          <Sep />
        </span>
        <Tools items={textAlign} className="ml-0.5 w-[103px]" />
        <span className="ml-1 flex items-center">
          <Sep />
          <Tools items={verticalAlign} className="ml-px mr-1 w-[77px]" />
          <Sep />
        </span>
        <button aria-label="Font color" className="ml-1.5 flex items-center gap-[7px]">
          <Icon>
            <text x="9" y="13" textAnchor="middle" fontFamily="Liberation Serif" fontWeight="bold" fontSize="16" fill="#999">
              A
            </text>
            <rect y="14" width="18" height="4" fill="#999" />
          </Icon>
          <Caret className="border-t-[#888]" />
        </button>
        <button aria-label="Fill color" className="ml-[7px] flex items-center gap-[7px]">
          <Icon>
            <rect width="18" height="18" fill="#9b9b9b" />
            <path d="M12 6l3-2" stroke="#eee" />
          </Icon>
          <Caret className="border-t-[#888]" />
        </button>
        <span className="ml-2 flex items-center gap-1.5">
          <Sep />
          <button aria-label="Anchors">
            <Anchor size={16} strokeWidth={2.200} className="text-[#929292]" />
          </button>
        </span>
        <button aria-label="Border" className="ml-2.5 mr-2">
          <Icon size={17}>
            <path d="M2 2h14v14H2z" fill="none" stroke="#999" />
            <path d="M9 3v12M3 9h12" stroke="#999" strokeDasharray="2 1" />
          </Icon>
        </button>
        <Sep />
        <Tools items={orderIcons} className="ml-0.5 w-[104px]" />
      </div>
      <div className="flex min-h-0 flex-1">
        <aside className="flex w-[204px] shrink-0 flex-col pl-1.5 pt-1">
          <PanelHead text="Report Tree" close className={segoe} />
          <ReportTree />
          <div className="pt-1">
            <PanelHead text="Properties for Detail" />
          </div>
          <div className="min-h-0 flex-1 overflow-hidden bg-white">
            <PropertyGrid />
          </div>
        </aside>
        <Workspace />
        <DataPanel />
      </div>
      <footer className={`relative flex h-[29px] shrink-0 items-center pt-1 ${segoe}`}>
        <span className="flex-1">Ready.</span>
        {["Left: 0", "Top: 0", "Width: 0", "Height: 0"].map((t) => (
          <span key={t} className="flex h-6 w-[101px] items-center border-l border-[#bbb] pl-1">
            {t}
          </span>
        ))}
        <label htmlFor="zoom" className="flex h-6 w-[56px] items-center border-l border-[#bbb] pl-1">
          100%
        </label>
        <input
          id="zoom"
          type="range"
          min="0"
          max="100"
          defaultValue="11"
          className="mr-6 h-[11px] w-[155px] appearance-none border border-[#dcdcdc] bg-[#e5e9ea] [&::-webkit-slider-thumb]:h-[13px] [&::-webkit-slider-thumb]:w-[9px] [&::-webkit-slider-thumb]:appearance-none [&::-webkit-slider-thumb]:bg-[#0078d7] [&::-webkit-slider-thumb]:[clip-path:polygon(50%_0,100%_30%,100%_100%,0_100%,0_30%)]"
        />
        <svg width="10" height="10" viewBox="0 0 10 10" className="absolute bottom-0 right-0" aria-hidden="true">
          <path d="M1 10 10 1M5 10l5-5" stroke="#999" />
        </svg>
      </footer>
      <svg width="600" height="370" viewBox="0 0 600 370" className="pointer-events-none absolute left-[370px] top-[222px]" aria-hidden="true">
        <path d="M16 16 583 356" stroke="#d8623f" strokeWidth="2" />
        <path d="M8 10 26 12 17 27z" fill="#d8623f" />
      </svg>
    </section>
  );
}

export default function App() {
  return (
    <main className="relative flex h-screen flex-col overflow-hidden border-b-2 border-l border-r-2 border-black text-black">
      <div className="h-[4px] shrink-0 border-t border-black bg-[linear-gradient(to_right,#0d2c55_0,#17404f_24%,#4a7a48_45%,#7cab3c_69.800%,#04184a_70%)]" />
      <AppWindow />
      <Editor />
    </main>
  );
}
